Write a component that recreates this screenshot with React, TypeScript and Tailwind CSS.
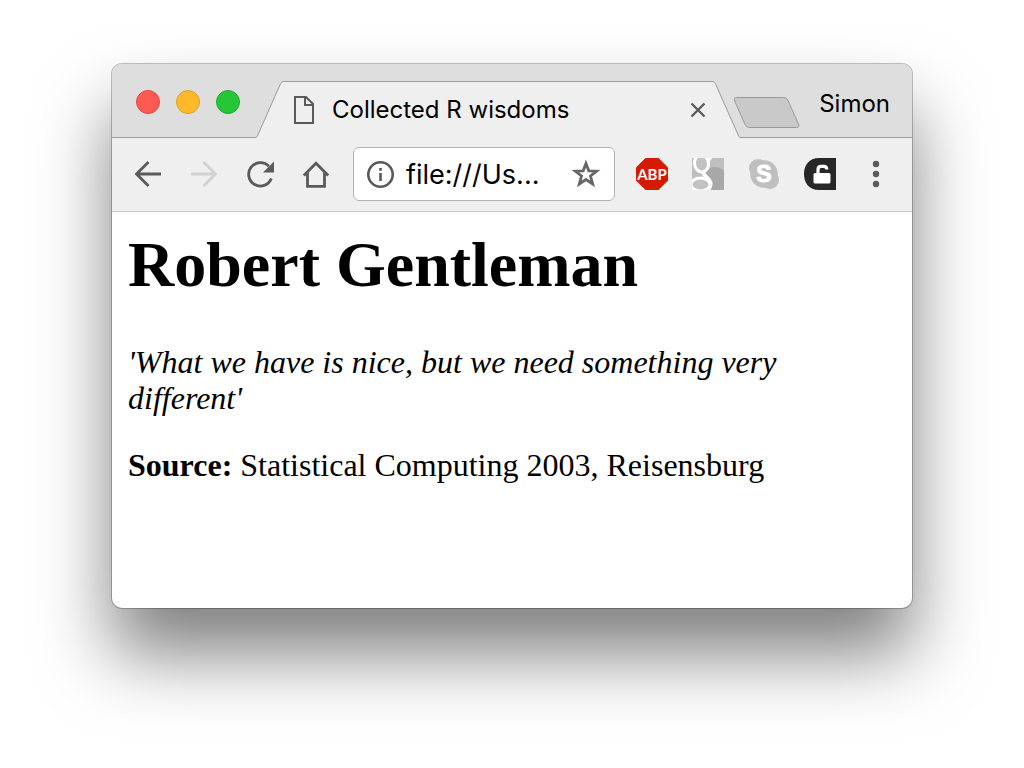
import type { ReactNode } from "react";

function IconButton({ label, children }: { label: string; children: ReactNode }) {
  return (
    <button type="button" aria-label={label} className="flex size-8 shrink-0 items-center justify-center">
      {children}
    </button>
  );
}

function TrafficLight({ label, color }: { label: string; color: string }) {
  return <button type="button" aria-label={label} className={`size-6 rounded-full border ${color}`} />;
}

function TitleBar() {
  return (
    <header className="flex h-[74px] items-end bg-[#dedede]">
      <div className="flex h-full w-36 shrink-0 items-center gap-4 border-b border-[#999999] pt-[3px] pl-6">
        <TrafficLight label="Close window" color="border-[#e2463f] bg-[#ff5a52]" />
        <TrafficLight label="Minimize window" color="border-[#dfa023] bg-[#ffb92b]" />
        <TrafficLight label="Zoom window" color="border-[#1dac2b] bg-[#27c638]" />
      </div>

      <svg viewBox="0 0 28 57" className="h-[57px] w-7 shrink-0" aria-hidden="true">
        <path d="M0 57V56.500C.8 56.200 1.200 55.300 1.800 54L24.200 3.500C25.200 1.300 26.200 .5 28 .5V57Z" fill="#efefef" />
        <path d="M0 56.500C.8 56.200 1.200 55.300 1.800 54L24.200 3.500C25.200 1.300 26.200 .5 28 .5" fill="none" stroke="#999999" />
      </svg>
      <div className="flex h-[57px] min-w-0 flex-1 items-center border-t border-[#999999] bg-[#efefef] pr-1.5 pl-2.5">
        <svg viewBox="0 0 20 28" className="h-7 w-5 shrink-0" fill="none" stroke="#5a5a5a" strokeWidth="2" aria-hidden="true">
          <path d="M1 1H12L19 8V27H1Z" />
          <path d="M11 1V9H19" />
        </svg>
        <span className="ml-[18px] min-w-0 flex-1 truncate text-2xl text-black">Collected R wisdoms</span>
        <button type="button" aria-label="Close tab" className="shrink-0">
          <svg viewBox="0 0 16 16" className="size-4" stroke="#5a5a5a" strokeWidth="2.300">
            <path d="M1.500 1.500L14.500 14.500M14.500 1.500L1.500 14.500" />
          </svg>
        </button>
      </div>
      <svg viewBox="0 0 28 57" className="h-[57px] w-7 shrink-0" aria-hidden="true">
        <path d="M28 57V56.500C27.200 56.200 26.800 55.300 26.200 54L3.800 3.500C2.800 1.300 1.800 .5 0 .5V57Z" fill="#efefef" />
        <path d="M28 56.500C27.200 56.200 26.800 55.300 26.200 54L3.800 3.500C2.800 1.300 1.800 .5 0 .5" fill="none" stroke="#999999" />
      </svg>

      <div className="flex h-full w-[172px] shrink-0 items-center justify-between border-b border-[#999999] pt-2 pr-[22px]">
        <button type="button" aria-label="New tab" className="-ml-[7px] mt-4">
          <svg viewBox="0 0 67 33" className="block h-[33px] w-[67px]">
            <path
              d="M3.500 1.500H50.500C52.500 1.500 54 2.500 55 4.500L65.500 28C66.500 30.500 65.800 31.500 63.500 31.500H17C14.500 31.500 13 30.500 12 28.500L1.700 5C.8 2.500 1.200 1.500 3.500 1.500Z"
              fill="#c9c9c9"
              stroke="#999999"
            />
          </svg>
        </button>
        <button type="button" className="pb-0.5 text-2xl text-black">Simon</button>
      </div>
    </header>
  );
}

function Toolbar() {
  return (
    <div className="flex h-[74px] items-center border-b border-[#cccccc] bg-[#efefef] px-5 pb-0.5">
      <nav aria-label="Navigation" className="flex gap-6">
        <IconButton label="Back">
          <svg viewBox="0 0 32 32" className="size-8" fill="none" stroke="#5a5a5a" strokeWidth="2.800">
            <path d="M29 16H5M16.500 4L4.500 16L16.500 28" />
          </svg>
        </IconButton>
        <IconButton label="Forward">
          <svg viewBox="0 0 32 32" className="size-8" fill="none" stroke="#d2d2d2" strokeWidth="2.800">
            <path d="M3 16H27M15.500 4L27.500 16L15.500 28" />
          </svg>
        </IconButton>
        <IconButton label="Reload">
          <svg viewBox="0 0 32 32" className="size-8" fill="none" stroke="#5a5a5a" strokeWidth="2.800">
            <path d="M27.300 20.500A11.700 11.700 0 1 1 24.800 8.200" />
            <path d="M30 3.500V14.500H19Z" fill="#5a5a5a" stroke="none" />
          </svg>
        </IconButton>
        <IconButton label="Home">
          <svg viewBox="0 0 32 32" className="size-8" fill="none" stroke="#5a5a5a" strokeWidth="2.800">
            <path d="M3.800 17.500L16 5.200L28.200 17.500" />
            <path d="M7.500 14.500V28.300H24.500V14.500" />
          </svg>
        </IconButton>
      </nav>

      <div className="mx-[21px] flex h-[54px] min-w-0 flex-1 items-center rounded-md border border-[#b2b2b2] bg-white px-3">
        <svg viewBox="0 0 28 28" className="size-7 shrink-0" fill="none" stroke="#5a5a5a" strokeWidth="2.600" aria-hidden="true">
          <circle cx="14.500" cy="14.500" r="12.200" />
          <path d="M14.500 13V21M14.500 8V10.700" />
        </svg>
        <input
          type="text"
          aria-label="Address"
          defaultValue="file:///Us..."
          className="ml-3 w-0 min-w-0 flex-1 bg-transparent pt-0.5 text-[27px] leading-9 text-black outline-none"
        />
        <button type="button" aria-label="Bookmark this page" className="shrink-0">
          <svg viewBox="0 0 32 32" className="size-8" fill="none" stroke="#666666" strokeWidth="2.800">
            <path d="M16 5.500L18.800 12.800L26.600 13.200L20.500 18L22.700 26L16 21.500L9.300 26L11.500 18L5.400 13.200L13.200 12.800Z" />
          </svg>
        </button>
      </div>

      <div className="flex gap-6">
        <IconButton label="Adblock Plus">
          <svg viewBox="0 0 32 32" className="size-8">
            <path d="M9.500 0H22.500L32 9.500V22.500L22.500 32H9.500L0 22.500V9.500Z" fill="#d61a00" />
            <text x="16" y="21.500" textAnchor="middle" fontSize="15" fontWeight="700" fill="#fff" className="font-['Lato',sans-serif]">ABP</text>
          </svg>
        </IconButton>
        <IconButton label="Google">
          <svg viewBox="0 0 32 32" className="size-8">
            <path d="M0 0H32V32H0Z" fill="#bfbfbf" />
            <path d="M13 17C16 7 27 7 32 13V32H13Z" fill="#a8a8a8" />
            <g fill="#c2c2c2" stroke="#fff">
              <path d="M11 13.500C11 18 17.500 19.500 18.700 25C19.300 28 17.500 30.500 15.500 33" fill="none" strokeWidth="3.600" />
              <ellipse cx="9.500" cy="5.500" rx="7" ry="8.500" strokeWidth="3" transform="rotate(-8 9.500 5.500)" />
              <path d="M13.500 .3H20L17.500 3H15" fill="#fff" strokeWidth=".5" />
              <ellipse cx="8.500" cy="26.500" rx="9.500" ry="6.500" strokeWidth="3" />
            </g>
          </svg>
        </IconButton>
        <IconButton label="Skype">
          <svg viewBox="0 0 32 32" className="size-8">
            <g fill="#bfbfbf">
              <circle cx="16" cy="16" r="13.800" />
              <circle cx="10" cy="10" r="9" />
              <circle cx="22" cy="22" r="9" />
            </g>
            <text x="16" y="24" textAnchor="middle" fontSize="23" fontWeight="700" fill="#fff" stroke="#fff" strokeLinejoin="round" className="font-['Liberation_Sans',sans-serif]">S</text>
          </svg>
        </IconButton>
        <IconButton label="Unlock">
          <svg viewBox="0 0 32 32" className="size-8">
            <path d="M32 0V32H15C5 32 0 25 0 16S5 0 15 0Z" fill="#272727" />
            <rect x="9.500" y="15" width="17" height="10.500" rx="1.500" fill="#fff" />
            <path d="M14 16V11.500Q14 8.300 17 8.300H20Q22.800 8.300 22.800 11.500" fill="none" stroke="#fff" strokeWidth="3.200" />
          </svg>
        </IconButton>
        <IconButton label="Menu">
          <svg viewBox="0 0 32 32" className="size-8" fill="#5a5a5a">
            <circle cx="16" cy="6" r="3.200" />
            <circle cx="16" cy="16" r="3.200" />
            <circle cx="16" cy="26" r="3.200" />
          </svg>
        </IconButton>
      </div>
    </div>
  );
}

export default function App() {
  return (
    <div className="min-h-screen bg-white px-28 py-16">
      <div className="overflow-hidden rounded-[10px] bg-white font-['Inter',sans-serif] shadow-[0_0_0_1px_rgba(0,0,0,0.24),0_46px_72px_rgba(0,0,0,0.5)]">
        <TitleBar />
        <Toolbar />
        <main className="px-4 pt-[17px] pb-[125px] font-['Liberation_Serif',serif] text-[32px] leading-9 text-black">
          <h1 className="text-[64px] leading-[72px] font-bold">Robert Gentleman</h1>
          <p className="mt-[43px] italic">'What we have is nice, but we need something very different'</p>
          <p className="mt-[31px]">
            <strong>Source:</strong> Statistical Computing 2003, Reisensburg
          </p>
        </main>
      </div>
    </div>
  );
}
